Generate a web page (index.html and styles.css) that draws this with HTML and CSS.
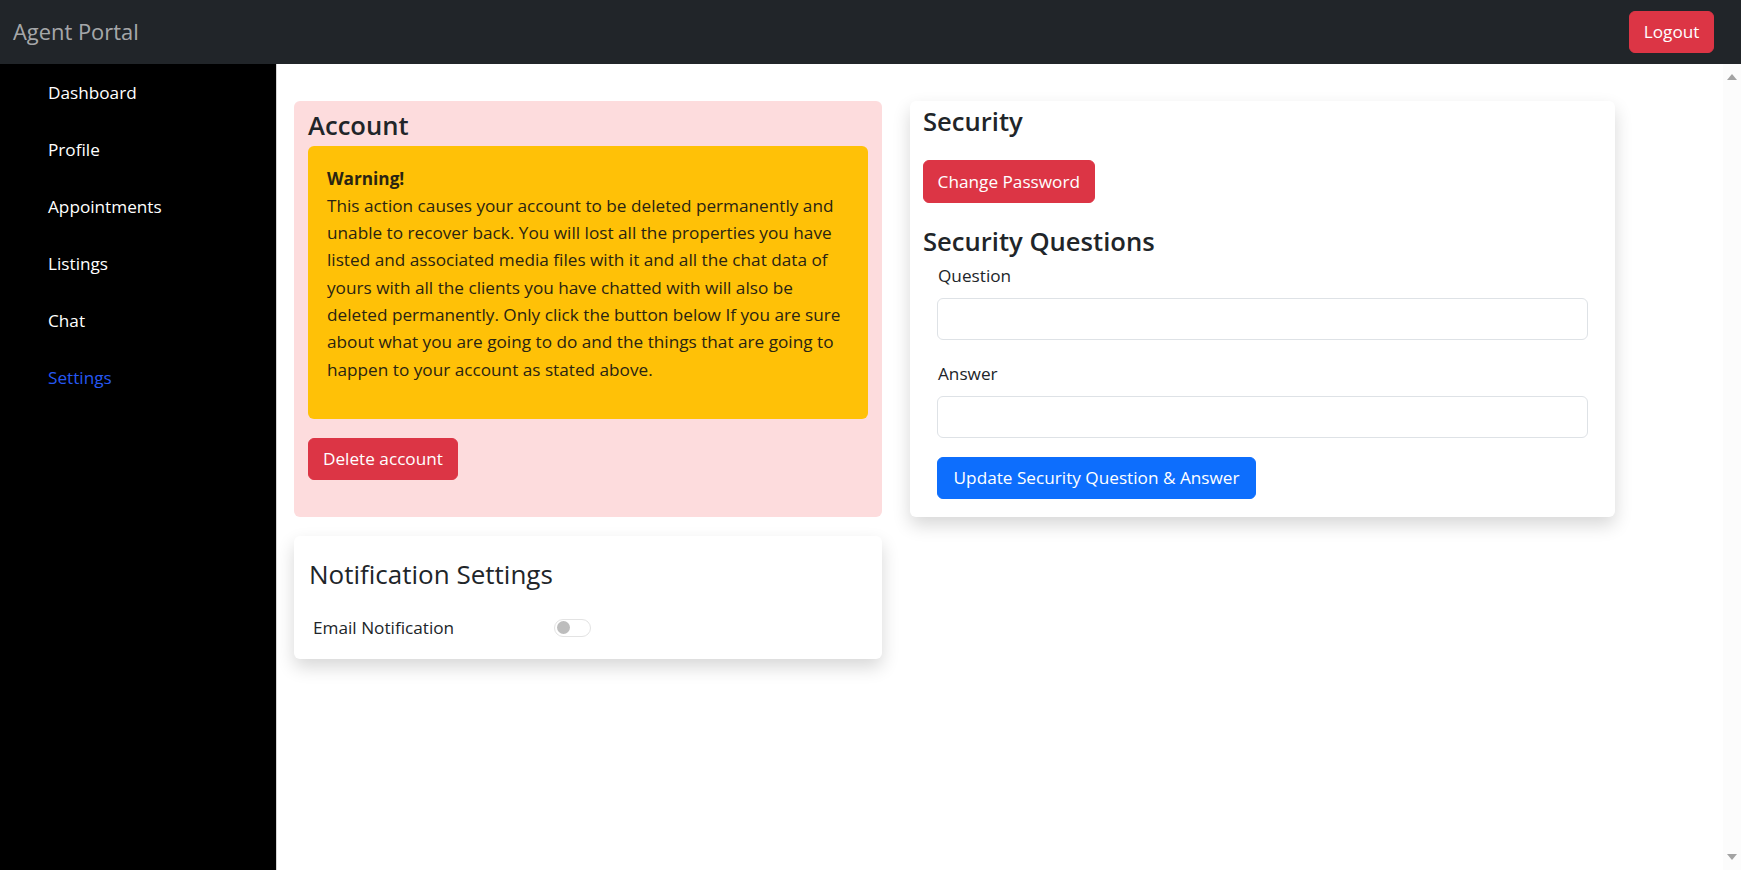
FILE: index.html
```html
<!DOCTYPE html>
<html lang="en">
<head>
<meta charset="utf-8">
<title>Agent Portal - Settings</title>
<link rel="stylesheet" href="styles.css">
</head>
<body>
<div class="page">
  <header class="topbar">
    <span class="brand">Agent Portal</span>
    <button class="btn btn-red logout">Logout</button>
  </header>
  <div class="layout">
    <nav class="sidebar">
      <a class="nav-link">Dashboard</a>
      <a class="nav-link">Profile</a>
      <a class="nav-link">Appointments</a>
      <a class="nav-link">Listings</a>
      <a class="nav-link">Chat</a>
      <a class="nav-link active">Settings</a>
    </nav>
    <main class="main">
      <section class="card account">
        <h4 class="card-title">Account</h4>
        <div class="warning">
          <strong class="warn-title">Warning!</strong>
          <p class="warn-text">This action causes your account to be deleted permanently and<br>unable to recover back. You will lost all the properties you have<br>listed and associated media files with it and all the chat data of<br>yours with all the clients you have chatted with will also be<br>deleted permanently. Only click the button below If you are sure<br>about what you are going to do and the things that are going to<br>happen to your account as stated above.</p>
        </div>
        <div><button class="btn btn-red">Delete account</button></div>
      </section>
      <section class="card security">
        <h4 class="card-title">Security</h4>
        <div><button class="btn btn-red">Change Password</button></div>
        <h4 class="card-title sq-title">Security Questions</h4>
        <div class="sq-form">
          <div class="field">
            <label class="field-label">Question</label>
            <input class="field-input" type="text">
          </div>
          <div class="field">
            <label class="field-label">Answer</label>
            <input class="field-input" type="text">
          </div>
          <button class="btn btn-blue update">Update Security Question &amp; Answer</button>
        </div>
      </section>
      <section class="card notif">
        <h4 class="notif-title">Notification Settings</h4>
        <div class="notif-row">
          <span class="notif-label">Email Notification</span>
          <span class="switch"><span class="knob"></span></span>
        </div>
      </section>
    </main>
    <div class="scrollbar">
      <span class="arrow up"></span>
      <span class="arrow down"></span>
    </div>
  </div>
</div>
</body>
</html>
```
FILE: styles.css
```css
* { box-sizing: border-box; }
html, body { margin: 0; padding: 0; background: #fff; }
body {
  font-family: "Open Sans", "Noto Sans", sans-serif;
  font-size: 17.2px;
  line-height: 27.3px;
  color: #212529;
}
.page {
  width: 1741px;
  height: 870px;
  display: flex;
  flex-direction: column;
}
.topbar {
  height: 64px;
  flex: none;
  background: #212529;
  display: flex;
  align-items: center;
  justify-content: space-between;
  padding: 0 27px 0 13px;
}
.brand {
  font-size: 21.9px;
  color: rgba(255,255,255,0.62);
  line-height: 30px;
}
.btn {
  font-family: inherit;
  font-size: 17.2px;
  line-height: 26px;
  padding: 7px 14px;
  border: 1px solid transparent;
  border-radius: 6px;
  color: #fff;
  cursor: pointer;
}
.btn-red { background: #dc3545; border-color: #dc3545; }
.btn-blue { background: #0d6efd; border-color: #0d6efd; }
.logout { padding: 7px 13.6px; }
.layout {
  flex: 1;
  display: flex;
  min-height: 0;
}
.sidebar {
  width: 277px;
  flex: none;
  background: #000;
  border-right: 1px solid #d4d4d4;
  display: flex;
  flex-direction: column;
}
.nav-link {
  display: block;
  padding: 15px 0 15px 48px;
  color: #fff;
  line-height: 27px;
  text-decoration: none;
}
.nav-link.active { color: #2658f2; }
.main {
  flex: 1;
  padding: 37px 0 0 17px;
  display: grid;
  grid-template-columns: 588px 705px;
  grid-template-rows: auto auto;
  column-gap: 28px;
  row-gap: 19px;
  align-content: start;
}
.card {
  border-radius: 6px;
}
.card-title {
  margin: 0;
  font-size: 25.6px;
  font-weight: 600;
  line-height: 30px;
  color: #212529;
}
.account {
  background: #fddcdd;
  padding: 10px 14px 37px;
  grid-column: 1;
  grid-row: 1;
}
.account .card-title { margin-bottom: 5px; }
.warning {
  background: #ffc107;
  border-radius: 6px;
  padding: 18.5px 19px 0;
  height: 273px;
  margin-bottom: 18.5px;
  color: #2a2412;
}
.warn-title { display: block; font-weight: 700; }
.warn-text { margin: 0; white-space: nowrap; }
.security {
  background: #fff;
  padding: 6px 27px 18px 13px;
  box-shadow: 0 8px 18px rgba(0,0,0,0.16);
  grid-column: 2;
  grid-row: 1;
}
.security > div:first-of-type { margin-top: 23px; }
.security .btn-red { line-height: 27px; padding: 7px 13.6px; }
.sq-title { margin-top: 24px; margin-bottom: 5px; }
.sq-form { padding-left: 14px; }
.field + .field { margin-top: 20.5px; }
.field-label { display: block; padding-left: 1px; margin-bottom: 8.5px; line-height: 27px; }
.field-input {
  display: block;
  width: 100%;
  height: 42px;
  border: 1px solid #dee2e6;
  border-radius: 6px;
  background: #fff;
  font: inherit;
}
.update { margin-top: 19px; padding: 7px 15.6px; }
.notif {
  background: #fff;
  box-shadow: 0 8px 18px rgba(0,0,0,0.16);
  grid-column: 1;
  grid-row: 2;
  padding: 23.5px 15px 17.5px;
}
.notif-title {
  margin: 0 0 24px;
  font-size: 26px;
  font-weight: 400;
  line-height: 31px;
}
.notif-row {
  display: flex;
  align-items: center;
  padding-left: 4px;
}
.notif-label { width: 241px; flex: none; }
.switch {
  width: 37px;
  height: 18px;
  border: 1px solid #e3e3e3;
  border-radius: 9px;
  display: flex;
  align-items: center;
  padding-left: 2px;
  background: #fff;
}
.knob {
  width: 13px;
  height: 13px;
  border-radius: 50%;
  background: #bdbdbd;
}
.scrollbar {
  width: 18px;
  flex: none;
  background: #fcfcfc;
  display: flex;
  flex-direction: column;
  justify-content: space-between;
  align-items: center;
  padding: 10px 0 10px;
}
.arrow {
  width: 0;
  height: 0;
  border-left: 5px solid transparent;
  border-right: 5px solid transparent;
}
.arrow.up { border-bottom: 6px solid #a3a3a3; }
.arrow.down { border-top: 6px solid #a3a3a3; }
```
